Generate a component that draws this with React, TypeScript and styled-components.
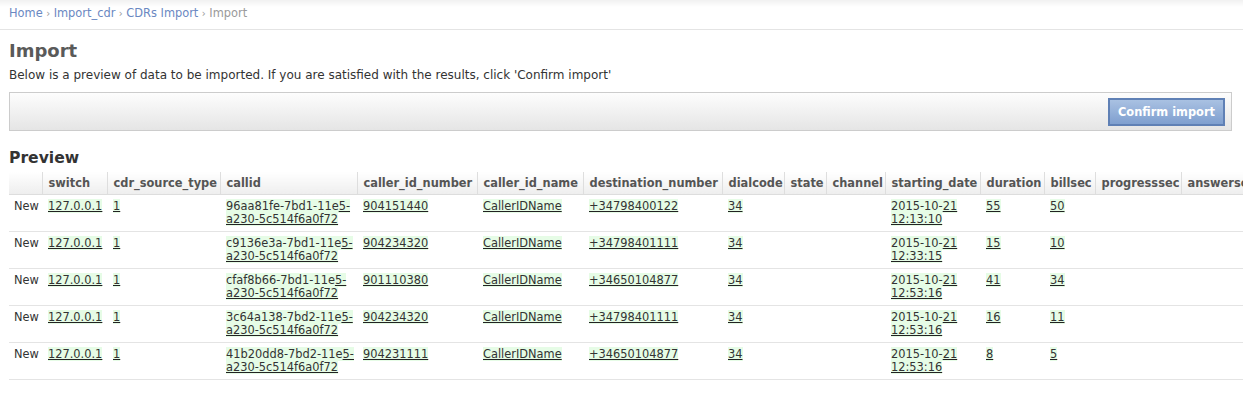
import React from "react";
import styled, { createGlobalStyle } from "styled-components";

const Global = createGlobalStyle`
  html, body { margin: 0; padding: 0; background: #fff; }
  body { font-family: "DejaVu Sans", Verdana, sans-serif; font-size: 12px; color: #333; overflow: hidden; }
`;

const Breadcrumbs = styled.nav`
  box-sizing: border-box;
  height: 30px;
  padding: 6px 9px 0;
  line-height: 14px;
  font-size: 11.4px;
  border-bottom: 1px solid #e4e4e4;
  background: linear-gradient(to bottom, #f1f1f1 0px, #fff 7px);
  white-space: nowrap;
`;

const Crumb = styled.a`
  color: #6a88c2;
  text-decoration: none;
`;

const CrumbSep = styled.span`
  color: #999;
  padding: 0 3.5px;
  font-size: 10px;
`;

const CrumbCurrent = styled.span`
  color: #9a9a9a;
`;

const Content = styled.main`
  padding: 0 11px 0 9px;
`;

const Title = styled.h1`
  margin: 10px 0 0;
  font-size: 18px;
  line-height: 22px;
  font-weight: bold;
  color: #5a5a5a;
`;

const Lead = styled.p`
  margin: 6px 0 0;
  font-size: 12px;
  line-height: 14px;
  color: #333;
`;

const ActionBar = styled.div`
  box-sizing: border-box;
  margin-top: 10px;
  height: 39px;
  border: 1px solid #cccccc;
  background: linear-gradient(to bottom, #fdfdfd, #e5e5e5);
  display: flex;
  justify-content: flex-end;
  align-items: center;
  padding: 0 6px;
`;

const ConfirmButton = styled.button`
  box-sizing: border-box;
  width: 117px;
  height: 28px;
  margin-top: 1px;
  border: 2px solid #5f80b5;
  background: linear-gradient(to bottom, #a9c1e2, #7f9fcf);
  color: #fff;
  font-family: "DejaVu Sans", Verdana, sans-serif;
  font-weight: bold;
  font-size: 11.4px;
  padding: 0;
  cursor: pointer;
`;

const SubTitle = styled.h2`
  margin: 17px 0 0;
  font-size: 15.6px;
  line-height: 20px;
  font-weight: bold;
  color: #333;
`;

const Table = styled.table<{ $w: number }>`
  margin-top: 4px;
  border-collapse: collapse;
  table-layout: fixed;
  width: ${(p) => p.$w}px;
  font-size: 11.4px;
`;

const HeadCell = styled.th<{ $w: number; $first?: boolean }>`
  width: ${(p) => p.$w}px;
  box-sizing: border-box;
  height: 22px;
  padding: 0 4px 0 6px;
  text-align: left;
  font-weight: bold;
  font-size: 11.4px;
  color: #555;
  white-space: nowrap;
  overflow: hidden;
  background: linear-gradient(to bottom, #ffffff, #eeeeee);
  border-bottom: 1px solid #dddddd;
  border-left: ${(p) => (p.$first ? "none" : "1px solid #dedede")};
`;

const Row = styled.tr`
  border-bottom: 1px solid #e4e4e4;
`;

const Cell = styled.td`
  vertical-align: top;
  padding: 5px 4px 5px 6px;
  line-height: 13px;
  height: 26px;
  color: #333;
  font-size: 11.4px;
  white-space: nowrap;
`;

const StatusCell = styled(Cell)`
  padding-left: 5px;
`;

const Value = styled.span`
  background: #e6fce6;
`;

const Under = styled.span`
  text-decoration: underline;
  text-decoration-color: #222;
`;

type Col = { key: string; w: number };

const columns: Col[] = [
  { key: "", w: 33 },
  { key: "switch", w: 65 },
  { key: "cdr_source_type", w: 113 },
  { key: "callid", w: 137 },
  { key: "caller_id_number", w: 120 },
  { key: "caller_id_name", w: 106 },
  { key: "destination_number", w: 139 },
  { key: "dialcode", w: 62 },
  { key: "state", w: 42 },
  { key: "channel", w: 59 },
  { key: "starting_date", w: 95 },
  { key: "duration", w: 64 },
  { key: "billsec", w: 51 },
  { key: "progresssec", w: 86 },
  { key: "answersec", w: 90 },
];

const tableWidth = columns.reduce((s, c) => s + c.w, 0);

type Rec = {
  callid: [string, string, string];
  number: string;
  dest: string;
  time: string;
  duration: string;
  billsec: string;
};

const rows: Rec[] = [
  { callid: ["96aa81fe-7bd1-11e", "5-", "a230-5c514f6a0f72"], number: "904151440", dest: "+34798400122", time: "12:13:10", duration: "55", billsec: "50" },
  { callid: ["c9136e3a-7bd1-11e", "5-", "a230-5c514f6a0f72"], number: "904234320", dest: "+34798401111", time: "12:33:15", duration: "15", billsec: "10" },
  { callid: ["cfaf8b66-7bd1-11e", "5-", "a230-5c514f6a0f72"], number: "901110380", dest: "+34650104877", time: "12:53:16", duration: "41", billsec: "34" },
  { callid: ["3c64a138-7bd2-11e", "5-", "a230-5c514f6a0f72"], number: "904234320", dest: "+34798401111", time: "12:53:16", duration: "16", billsec: "11" },
  { callid: ["41b20dd8-7bd2-11e", "5-", "a230-5c514f6a0f72"], number: "904231111", dest: "+34650104877", time: "12:53:16", duration: "8", billsec: "5" },
];

const Link = ({ children }: { children: React.ReactNode }) => (
  <Value>
    <Under>{children}</Under>
  </Value>
);

export default function App() {
  return (
    <>
      <Global />
      <Breadcrumbs>
        <Crumb href="#">Home</Crumb>
        <CrumbSep>›</CrumbSep>
        <Crumb href="#">Import_cdr</Crumb>
        <CrumbSep>›</CrumbSep>
        <Crumb href="#">CDRs Import</Crumb>
        <CrumbSep>›</CrumbSep>
        <CrumbCurrent>Import</CrumbCurrent>
      </Breadcrumbs>
      <Content>
        <Title>Import</Title>
        <Lead>
          Below is a preview of data to be imported. If you are satisfied with the results, click 'Confirm import'
        </Lead>
        <ActionBar>
          <ConfirmButton>Confirm import</ConfirmButton>
        </ActionBar>
        <SubTitle>Preview</SubTitle>
        <Table $w={tableWidth}>
          <thead>
            <tr>
              {columns.map((c, i) => (
                <HeadCell key={i} $w={c.w} $first={i === 0}>
                  {c.key}
                </HeadCell>
              ))}
            </tr>
          </thead>
          <tbody>
            {rows.map((r, i) => (
              <Row key={i}>
                <StatusCell>New</StatusCell>
                <Cell><Link>127.0.0.1</Link></Cell>
                <Cell><Link>1</Link></Cell>
                <Cell>
                  <Value>
                    {r.callid[0]}
                    <Under>{r.callid[1]}</Under>
                    <br />
                    <Under>{r.callid[2]}</Under>
                  </Value>
                </Cell>
                <Cell><Link>{r.number}</Link></Cell>
                <Cell><Link>CallerIDName</Link></Cell>
                <Cell><Link>{r.dest}</Link></Cell>
                <Cell><Link>34</Link></Cell>
                <Cell />
                <Cell />
                <Cell>
                  <Value>
                    2015-10-<Under>21</Under>
                    <br />
                    <Under>{r.time}</Under>
                  </Value>
                </Cell>
                <Cell><Link>{r.duration}</Link></Cell>
                <Cell><Link>{r.billsec}</Link></Cell>
                <Cell />
                <Cell />
              </Row>
            ))}
          </tbody>
        </Table>
      </Content>
    </>
  );
}
